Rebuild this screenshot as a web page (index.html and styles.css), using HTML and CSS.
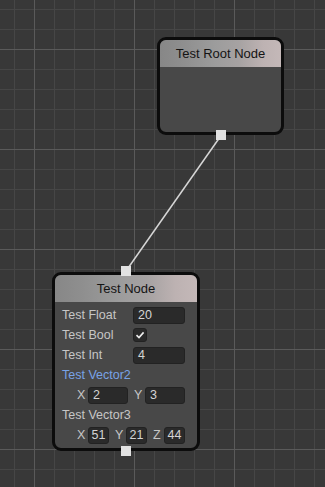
FILE: index.html
```html
<!DOCTYPE html>
<html>
<head>
    <meta charset="UTF-8">
    <meta name="viewport" content="width=device-width, initial-scale=1.0">
    <title>Node Graph</title>
    <link rel="stylesheet" href="styles.css">
</head>
<body>
    <div id="graph">
        <svg class="edges" width="325" height="487">
            <line x1="220" y1="137" x2="126" y2="271" stroke="#d6d6d6" stroke-width="1.5" />
        </svg>

        <div class="node root-node">
            <div class="node-title">Test Root Node</div>
            <div class="node-body"></div>
            <span class="port port-out"></span>
        </div>

        <div class="node test-node">
            <span class="port port-in"></span>
            <div class="node-title">Test Node</div>
            <div class="node-body">
                <div class="row">
                    <span class="label">Test Float</span>
                    <span class="field">20</span>
                </div>
                <div class="row">
                    <span class="label">Test Bool</span>
                    <span class="checkbox">
                        <svg width="10" height="10" viewBox="0 0 10 10">
                            <path d="M1.5 5.2 L4 7.6 L8.6 2.4" fill="none" stroke="#eee" stroke-width="1.6" />
                        </svg>
                    </span>
                </div>
                <div class="row">
                    <span class="label">Test Int</span>
                    <span class="field">4</span>
                </div>
                <div class="row">
                    <span class="label highlight">Test Vector2</span>
                </div>
                <div class="row vec">
                    <span class="axis">X</span>
                    <span class="field vec2">2</span>
                    <span class="axis">Y</span>
                    <span class="field vec2">3</span>
                </div>
                <div class="row">
                    <span class="label">Test Vector3</span>
                </div>
                <div class="row vec">
                    <span class="axis">X</span>
                    <span class="field vec3">51</span>
                    <span class="axis">Y</span>
                    <span class="field vec3">21</span>
                    <span class="axis">Z</span>
                    <span class="field vec3">44</span>
                </div>
            </div>
            <span class="port port-out"></span>
        </div>
    </div>
</body>
</html>
```

FILE: styles.css
```css
body {
    margin: 0;
    font-family: "Liberation Sans", Arial, sans-serif;
    background-color: #383838;
}

#graph {
    position: relative;
    width: 325px;
    height: 487px;
    overflow: hidden;
    background-color: #383838;
    background-image:
        linear-gradient(to right, #5a5a5a 1px, transparent 1px),
        linear-gradient(to bottom, #5a5a5a 1px, transparent 1px),
        linear-gradient(to right, #464646 1px, transparent 1px),
        linear-gradient(to bottom, #464646 1px, transparent 1px);
    background-size: 100px 100px, 100px 100px, 20px 20px, 20px 20px;
    background-position: 34px 49px, 34px 49px, 14px 9px, 14px 9px;
}

.edges {
    position: absolute;
    left: 0;
    top: 0;
}

.node {
    position: absolute;
    box-sizing: border-box;
    border: 3px solid #0c0c0c;
    border-radius: 9px;
    background-color: #484848;
    display: flex;
    flex-direction: column;
}

.root-node {
    left: 157px;
    top: 37px;
    width: 127px;
    height: 98px;
}

.test-node {
    left: 52px;
    top: 272px;
    width: 148px;
    height: 179px;
}

.node-title {
    height: 27px;
    line-height: 27px;
    text-align: center;
    font-size: 13px;
    color: #141414;
    border-radius: 6px 6px 0 0;
    background: linear-gradient(to right, #878787 0%, #8f8f8f 20%, #9c9c9c 45%, #a6a2a2 65%, #bdb2b2 85%, #c4b8b8 100%);
}

.node-body {
    flex: 1;
    padding: 3px 12px 3px 7px;
}

.port {
    position: absolute;
    left: 50%;
    width: 10px;
    height: 10px;
    margin-left: -5px;
    background-color: #e2e2e2;
}

.port-in {
    top: -9px;
}

.port-out {
    bottom: -8px;
}

.row {
    display: flex;
    align-items: center;
    height: 20px;
    font-size: 12.5px;
    color: #c6c6c6;
}

.label {
    width: 71px;
}

.highlight {
    width: auto;
    color: #79a3e6;
}

.field {
    box-sizing: border-box;
    width: 52px;
    height: 17px;
    line-height: 15px;
    padding-left: 4px;
    background-color: #2a2a2a;
    border: 1px solid #222;
    border-radius: 3px;
    color: #d4d4d4;
}

.checkbox {
    box-sizing: border-box;
    width: 14px;
    height: 14px;
    display: flex;
    align-items: center;
    justify-content: center;
    background-color: #2a2a2a;
    border: 1px solid #222;
    border-radius: 3px;
}

.vec {
    padding-left: 15px;
}

.axis {
    width: 11px;
}

.vec .axis + .field {
    margin-right: 6px;
}

.vec .field:last-child {
    margin-right: 0;
}

.vec2 {
    width: 40px;
}

.vec2:nth-of-type(2) {
    margin-right: 7px;
}

.vec3 {
    width: 22px;
    padding-left: 3px;
}
```
